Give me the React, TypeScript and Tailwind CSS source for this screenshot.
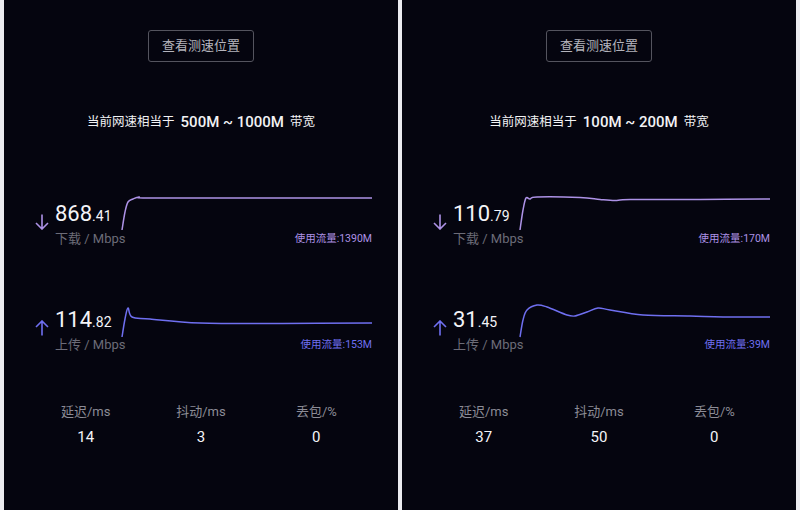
import React from "react";

type Pt = [number, number];

interface SpeedRowProps {
  dir: "down" | "up";
  whole: string;
  frac: string;
  label: string;
  usage: string;
  color: string;
  points: Pt[];
}

interface PanelProps {
  range: string;
  down: { whole: string; frac: string; usage: string; points: Pt[] };
  up: { whole: string; frac: string; usage: string; points: Pt[] };
  stats: string[];
}

const font = { fontFamily: "Roboto, 'Noto Sans CJK SC', sans-serif" };

// catmull-rom -> cubic bezier, keeps the trace soft like the app
const smooth = (pts: Pt[]) => {
  let d = `M${pts[0][0]},${pts[0][1]}`;
  for (let i = 0; i < pts.length - 1; i++) {
    const p0 = pts[i - 1] || pts[i];
    const p1 = pts[i];
    const p2 = pts[i + 1];
    const p3 = pts[i + 2] || p2;
    const c1x = p1[0] + (p2[0] - p0[0]) / 6;
    const c1y = p1[1] + (p2[1] - p0[1]) / 6;
    const c2x = p2[0] - (p3[0] - p1[0]) / 6;
    const c2y = p2[1] - (p3[1] - p1[1]) / 6;
    d += ` C${c1x},${c1y} ${c2x},${c2y} ${p2[0]},${p2[1]}`;
  }
  return d;
};

const Arrow = ({ dir, color }: { dir: "down" | "up"; color: string }) => (
  <svg width="14" height="16" viewBox="0 0 14 16" className="mt-[18px] shrink-0">
    {dir === "down" ? (
      <path d="M7 0.5V15M1 9L7 15L13 9" fill="none" stroke={color} strokeWidth="1.6" />
    ) : (
      <path d="M7 15.5V1M1 7L7 1L13 7" fill="none" stroke={color} strokeWidth="1.6" />
    )}
  </svg>
);

const SpeedRow: React.FC<SpeedRowProps> = ({ dir, whole, frac, label, usage, color, points }) => (
  <div className="flex pl-[31px] pr-[26px]">
    <div className="flex w-[87px] shrink-0">
      <Arrow dir={dir} color={color} />
      <div className="ml-[6px] pt-[5px]">
        <div className="leading-[26px] text-[#f4f4f8] whitespace-nowrap">
          <span className="text-[22px]">{whole}</span>
          <span className="text-[14px]">.{frac}</span>
        </div>
        <div className="mt-[2px] text-[13px] leading-[16px] text-[#6c6c78] whitespace-nowrap">{label} / Mbps</div>
      </div>
    </div>
    <div className="flex-1 flex flex-col">
      <svg width="250" height="36" viewBox="0 0 250 36" className="overflow-visible">
        <path d={smooth(points)} fill="none" stroke={color} strokeWidth="1.5" strokeLinejoin="round" />
      </svg>
      <div className="mt-[1px] text-right text-[10.5px] leading-[12px]" style={{ color }}>
        使用流量:{usage}
      </div>
    </div>
  </div>
);

const Panel: React.FC<PanelProps> = ({ range, down, up, stats }) => (
  <div className="w-[394px] h-full bg-[#05050f] flex flex-col" style={font}>
    <div className="pt-[30px] flex justify-center">
      <div className="w-[106px] h-[32px] border border-[#54545e] rounded-[3px] flex items-center justify-center text-[13px] text-[#b4b4bc]">
        查看测速位置
      </div>
    </div>
    <div className="mt-[50px] h-[20px] flex items-center justify-center text-[12.5px] text-[#f2f2f4]">
      <span>当前网速相当于</span>
      <span className="mx-[6px] text-[15px] font-medium">{range}</span>
      <span>带宽</span>
    </div>
    <div className="mt-[64px]">
      <SpeedRow dir="down" label="下载" color="#ad92e6" {...down} />
    </div>
    <div className="mt-[55px]">
      <SpeedRow dir="up" label="上传" color="#6f6ff0" {...up} />
    </div>
    <div className="mt-[51px] grid grid-cols-3 px-[24px]">
      {["延迟/ms", "抖动/ms", "丢包/%"].map((t, i) => (
        <div key={t} className="flex flex-col items-center">
          <span className="text-[13px] leading-[16px] text-[#8c8c96]">{t}</span>
          <span className="mt-[8px] text-[15px] leading-[18px] text-[#f4f4f8]">{stats[i]}</span>
        </div>
      ))}
    </div>
  </div>
);

export default function App() {
  return (
    <div className="w-[800px] h-[510px] bg-[#ececf0] flex gap-[4px] px-[4px] overflow-hidden">
      <Panel
        range="500M ~ 1000M"
        down={{
          whole: "868",
          frac: "41",
          usage: "1390M",
          points: [[0, 34], [3, 16], [6, 6], [11, 3], [17, 1], [25, 2], [120, 2], [250, 2]],
        }}
        up={{
          whole: "114",
          frac: "82",
          usage: "153M",
          points: [[0, 35], [3, 17], [6, 6], [10, 15], [28, 17], [78, 21], [160, 21.5], [250, 21]],
        }}
        stats={["14", "3", "0"]}
      />
      <Panel
        range="100M ~ 200M"
        down={{
          whole: "110",
          frac: "79",
          usage: "170M",
          points: [[0, 34], [3, 14], [6, 2], [10, 3], [17, 1], [60, 1.5], [80, 3.5], [95, 4.5], [110, 3.5], [180, 3.5], [250, 3]],
        }}
        up={{
          whole: "31",
          frac: "45",
          usage: "39M",
          points: [
            [0, 35], [3, 18], [7, 8], [17, 3], [27, 5], [47, 13], [55, 14], [67, 10], [78, 6], [90, 8],
            [123, 13], [170, 14], [203, 15], [250, 15],
          ],
        }}
        stats={["37", "50", "0"]}
      />
    </div>
  );
}
